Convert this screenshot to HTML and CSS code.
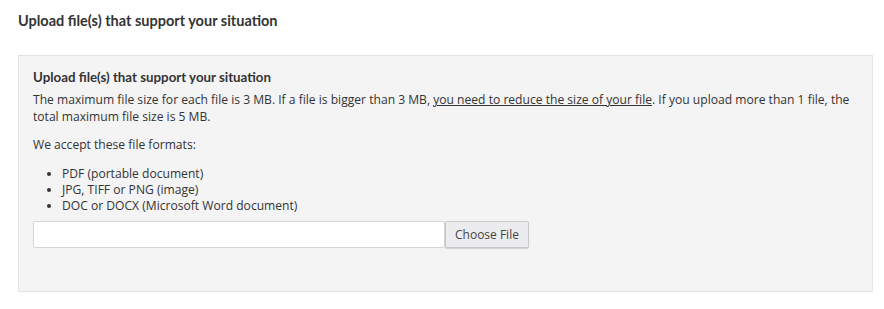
FILE: index.html
```html
<!DOCTYPE html>
<html lang="en">

<head>
  <meta charset="UTF-8">
  <title>Upload files</title>
  <link rel="stylesheet" href="styles.css">
</head>

<body>
  <h2 class="page-title">Upload file(s) that support your situation</h2>

  <div class="upload-box">
    <h3 class="upload-title">Upload file(s) that support your situation</h3>
    <p class="upload-text">The maximum file size for each file is 3 MB. If a file is bigger than 3 MB, <a href="#">you need to reduce the size of your file</a>. If you upload more than 1 file, the total maximum file size is 5 MB.</p>
    <p class="upload-text">We accept these file formats:</p>
    <ul class="format-list">
      <li>PDF (portable document)</li>
      <li>JPG, TIFF or PNG (image)</li>
      <li>DOC or DOCX (Microsoft Word document)</li>
    </ul>
    <div class="file-row">
      <div class="file-name"></div>
      <button class="file-button">Choose File</button>
    </div>
  </div>
</body>

</html>
```

FILE: styles.css
```css
body {
  margin: 0;
  padding: 0 11px 0 18px;
  background-color: #fff;
  color: #333;
  font-family: 'Open Sans', 'Segoe UI', sans-serif;
  font-size: 12.1px;
}

.page-title {
  font-family: Lato, sans-serif;
  font-size: 14.5px;
  font-weight: bold;
  color: #333;
  margin: 0;
  padding: 12px 0 0;
  line-height: 17px;
}

.upload-box {
  margin-top: 26px;
  padding: 13px 14px 43px;
  background-color: #f4f4f5;
  border: 1px solid #e2e2e4;
  border-right-color: #e6e6e8;
}

.upload-title {
  font-family: Lato, sans-serif;
  font-size: 13.3px;
  font-weight: bold;
  color: #333;
  margin: 0 0 7px;
  line-height: 16px;
}

.upload-text {
  margin: 0 0 12px;
  line-height: 16.5px;
}

.upload-text a {
  color: #333;
  text-decoration: underline;
}

.format-list {
  margin: 4px 0 7px;
  padding-left: 29px;
  line-height: 16px;
}

.file-row {
  display: flex;
  align-items: stretch;
}

.file-name {
  width: 410px;
  height: 25px;
  background-color: #fff;
  border: 1px solid #d4d4d6;
  border-radius: 2px;
}

.file-button {
  margin: 0;
  padding: 0 9px;
  height: 27px;
  font-family: 'Open Sans', 'Segoe UI', sans-serif;
  font-size: 12px;
  color: #444;
  background-color: #ececee;
  border: 1px solid #c8c8ca;
  border-radius: 2px;
  box-shadow: 0 1px 1px rgba(0, 0, 0, 0.15);
}
```
